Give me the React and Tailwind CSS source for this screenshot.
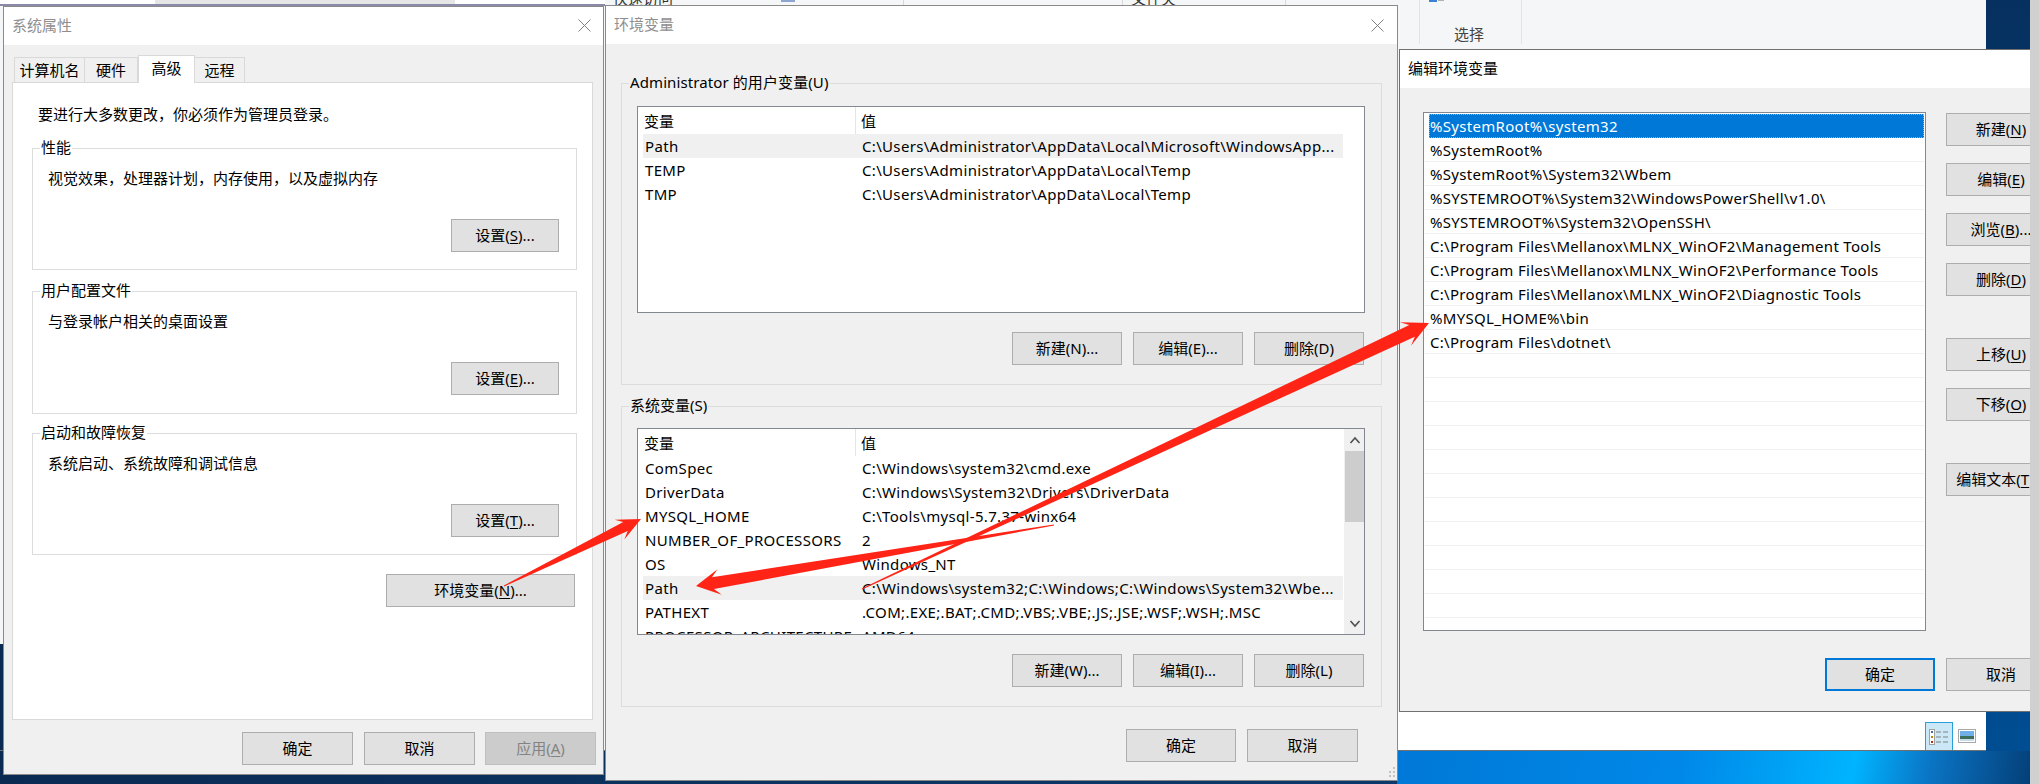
const FONT = "font-['Noto_Sans','Noto_Sans_CJK_SC',sans-serif] text-[15px] leading-5 text-black";

function Btn({ children, className = "", disabled = false, primary = false }) {
  const skin = disabled
    ? "bg-[#cccccc] border border-[#bfbfbf] text-[#838383]"
    : primary
      ? "bg-[#e1e1e1] border-2 border-[#0078d7]"
      : "bg-[#e1e1e1] border border-[#adadad]";
  return (
    <div className={`h-[33px] shrink-0 flex items-center justify-center whitespace-nowrap pb-[1px] ${skin} ${className}`}>
      {children}
    </div>
  );
}

function Close({ className = "" }) {
  return (
    <svg width="13" height="13" viewBox="0 0 13 13" className={`absolute ${className}`}>
      <path d="M0.5 0.5 L12.5 12.5 M12.5 0.5 L0.5 12.5" stroke="#808080" strokeWidth="1" fill="none" />
    </svg>
  );
}

function TitleBar({ title, dark = false, close = true, closeClass = "" }) {
  return (
    <div className="relative h-[38px] shrink-0 bg-white flex items-center pl-[8px] pb-[2px]">
      <span className={dark ? "text-black" : "text-[#8f8f8f]"}>{title}</span>
      {close && <Close className={closeClass} />}
    </div>
  );
}

function Group({ legend, className = "", children }) {
  return (
    <div className={`relative border border-[#dcdcdc] ${className}`}>
      <span className="absolute left-[7px] top-[-12px] bg-inherit px-[1px] whitespace-nowrap">{legend}</span>
      {children}
    </div>
  );
}

function SettingsGroup({ legend, text, btn, className = "" }) {
  return (
    <Group legend={legend} className={`bg-white flex flex-col ${className}`}>
      <div className="pl-[15px] pt-[19px] whitespace-nowrap">{text}</div>
      <Btn className="w-[108px] self-end mr-[17px] mt-[31px]">{btn}</Btn>
    </Group>
  );
}

function VarRow({ name, value, hot }) {
  return (
    <div className={`h-[24px] shrink-0 flex items-center whitespace-nowrap pl-[2px] tracking-[0.33px] pb-[1px] ${hot ? "bg-[#f0f0f0]" : ""}`}>
      <span className="w-[217px] shrink-0">{name}</span>
      <span className="overflow-hidden">{value}</span>
    </div>
  );
}

function VarList({ rows, scroll = false, className = "" }) {
  return (
    <div className={`h-[207px] w-[728px] ml-[15px] border border-[#828790] bg-white flex overflow-hidden ${className}`}>
      <div className="w-[705px] shrink-0 pl-[5px] flex flex-col">
        <div className="h-[27px] shrink-0 flex items-center">
          <span className="w-[213px] pl-[1px] h-full flex items-center border-r border-[#e5e5e5]">变量</span>
          <span className="pl-[5px]">值</span>
        </div>
        {rows.map((r) => (
          <VarRow key={r[0]} name={r[0]} value={r[1]} hot={r[2]} />
        ))}
      </div>
      {scroll && (
        <div className="w-[21px] ml-[1px] shrink-0 bg-[#f0f0f0] flex flex-col items-center">
          <svg width="12" height="22" viewBox="0 0 12 22" className="shrink-0">
            <path d="M1.5 14 L6 9 L10.500 14" stroke="#505050" strokeWidth="1.6" fill="none" />
          </svg>
          <div className="w-[19px] h-[71px] bg-[#cdcdcd] shrink-0" />
          <svg width="12" height="22" viewBox="0 0 12 22" className="shrink-0 mt-[91px]">
            <path d="M1.5 8 L6 13 L10.500 8" stroke="#505050" strokeWidth="1.6" fill="none" />
          </svg>
        </div>
      )}
    </div>
  );
}

function Mn({ c }) {
  return <span className="underline underline-offset-2">{c}</span>;
}

function arrowPoints(x1, y1, x2, y2, tail, neck, headLen, headW) {
  const L = Math.hypot(x2 - x1, y2 - y1);
  const ux = (x2 - x1) / L, uy = (y2 - y1) / L;
  const nx = -uy, ny = ux;
  const bx = x2 - ux * headLen, by = y2 - uy * headLen;
  const nk = x2 - ux * (headLen * 0.72), nky = y2 - uy * (headLen * 0.72);
  const p = [
    [x1 + nx * tail / 2, y1 + ny * tail / 2],
    [nk + nx * neck / 2, nky + ny * neck / 2],
    [bx + nx * headW / 2, by + ny * headW / 2],
    [x2, y2],
    [bx - nx * headW / 2, by - ny * headW / 2],
    [nk - nx * neck / 2, nky - ny * neck / 2],
    [x1 - nx * tail / 2, y1 - ny * tail / 2],
  ];
  return p.map((q) => q.map((v) => v.toFixed(1)).join(",")).join(" ");
}

const userRows = [
  ["Path", "C:\\Users\\Administrator\\AppData\\Local\\Microsoft\\WindowsApp...", true],
  ["TEMP", "C:\\Users\\Administrator\\AppData\\Local\\Temp"],
  ["TMP", "C:\\Users\\Administrator\\AppData\\Local\\Temp"],
];
const sysRows = [
  ["ComSpec", "C:\\Windows\\system32\\cmd.exe"],
  ["DriverData", "C:\\Windows\\System32\\Drivers\\DriverData"],
  ["MYSQL_HOME", "C:\\Tools\\mysql-5.7.37-winx64"],
  ["NUMBER_OF_PROCESSORS", "2"],
  ["OS", "Windows_NT"],
  ["Path", "C:\\Windows\\system32;C:\\Windows;C:\\Windows\\System32\\Wbe...", true],
  ["PATHEXT", ".COM;.EXE;.BAT;.CMD;.VBS;.VBE;.JS;.JSE;.WSF;.WSH;.MSC"],
  ["PROCESSOR_ARCHITECTURE", "AMD64"],
];
const paths = [
  "%SystemRoot%",
  "%SystemRoot%\\System32\\Wbem",
  "%SYSTEMROOT%\\System32\\WindowsPowerShell\\v1.0\\",
  "%SYSTEMROOT%\\System32\\OpenSSH\\",
  "C:\\Program Files\\Mellanox\\MLNX_WinOF2\\Management Tools",
  "C:\\Program Files\\Mellanox\\MLNX_WinOF2\\Performance Tools",
  "C:\\Program Files\\Mellanox\\MLNX_WinOF2\\Diagnostic Tools",
  "%MYSQL_HOME%\\bin",
  "C:\\Program Files\\dotnet\\",
  "", "", "", "", "", "", "", "", "", "", "",
];

function Backdrop() {
  return (
    <>
      {/* desktop wallpaper */}
      <div className="absolute left-0 top-0 w-[2030px] h-[784px] bg-[linear-gradient(90deg,#0a2a52_0%,#0c3565_50%,#0c3f78_100%)]" />
      <div className="absolute left-[1397px] top-[751px] w-[633px] h-[33px] bg-[linear-gradient(100deg,#0078d7_0%,#0088e8_45%,#00b4ff_72%,#0a74c4_84%,#043f78_100%)]" />
      <div className="absolute left-[1986px] top-0 w-[44px] h-[751px] bg-[linear-gradient(180deg,#06305f_0%,#004d92_100%)]" />
      <div className="absolute left-[2030px] top-0 w-[9px] h-[784px] bg-[#d0d0d0]" />
      {/* explorer behind the dialogs */}
      <div className="absolute left-0 top-0 w-[1986px] h-[751px] bg-[#f5f6f7] overflow-hidden border-b border-[#707070]">
        <div className="absolute left-0 top-0 w-[155px] h-[5px] bg-white" />
        <div className="absolute left-[155px] top-0 w-[300px] h-[5px] bg-[#e6e6e6]" />
        <div className="absolute left-[455px] top-0 w-[150px] h-[5px] bg-white" />
        <div className="absolute left-0 top-[4px] w-[605px] h-[2px] bg-[#8a8aa8]" />
        <span className="absolute left-[613px] top-[-12px] text-[15px] text-[#333]">快速访问</span>
        <span className="absolute left-[1131px] top-[-12px] text-[15px] text-[#333]">文件夹</span>
        <div className="absolute left-[781px] top-0 w-[14px] h-[2px] bg-[#8ea5cf]" />
        <div className="absolute left-[903px] top-0 w-px h-[5px] bg-[#d8d8d8]" />
        <div className="absolute left-[1122px] top-0 w-px h-[5px] bg-[#d8d8d8]" />
        <div className="absolute left-[1285px] top-0 w-px h-[5px] bg-[#d8d8d8]" />
        <div className="absolute left-[1419px] top-0 w-px h-[44px] bg-[#e2e3e5]" />
        <div className="absolute left-[1521px] top-0 w-px h-[44px] bg-[#e2e3e5]" />
        <div className="absolute left-[1429px] top-0 w-[8px] h-[2px] bg-[#3b82d6]" />
        <div className="absolute left-[1438px] top-0 w-[6px] h-[1px] bg-[#b0b0b0]" />
        <span className="absolute left-[1454px] top-[24px] text-[15px] leading-5 text-[#444]">选择</span>
        <div className="absolute left-0 top-[644px] w-[3px] h-[107px] bg-[#0a2a52]" />
        <div className="absolute left-[1397px] top-[712px] w-[589px] h-[38px] bg-white">
          <div className="absolute left-[528px] top-[10px] w-[28px] h-[29px] bg-[#cce8f6] border border-[#26a0da] flex items-center justify-center">
            <svg width="20" height="16" viewBox="0 0 20 16">
              <rect x="0.500" y="0.500" width="5" height="15" fill="#fff" stroke="#a0a0a0" />
              <rect x="2" y="2" width="2" height="2" fill="#3b6ea5" />
              <rect x="2" y="7" width="2" height="2" fill="#b8860b" />
              <rect x="2" y="12" width="2" height="2" fill="#b03010" />
              <path d="M7 3h5M14 3h5M7 8h5M14 8h5M7 13h5M14 13h5" stroke="#808080" strokeWidth="1" />
            </svg>
          </div>
          <svg width="18" height="14" viewBox="0 0 18 14" className="absolute left-[561px] top-[17px]">
            <rect x="0.500" y="0.500" width="17" height="13" fill="#fff" stroke="#a8a8a8" />
            <rect x="2" y="2" width="14" height="5" fill="#6fb0ea" />
            <rect x="2" y="7" width="14" height="3" fill="#3f6f5a" />
            <rect x="2" y="10" width="14" height="2" fill="#c4dcec" />
          </svg>
        </div>
      </div>
    </>
  );
}

export default function App() {
  return (
    <div className={`relative w-[2039px] h-[784px] overflow-hidden ${FONT}`}>
      <Backdrop />

      {/* 系统属性 */}
      <div className="absolute left-[3px] top-[6px] w-[601px] h-[769px] border border-[#8a8a8a] bg-[#f0f0f0] flex flex-col">
        <TitleBar title="系统属性" closeClass="left-[574px] top-[12px]" />
        <div className="h-[37px] shrink-0 flex items-end pl-[10px] relative z-10">
          <div className="w-[71px] h-[25px] bg-[#f0f0f0] border border-b-0 border-[#d9d9d9] flex items-center justify-center pb-[1px]">计算机名</div>
          <div className="w-[53px] h-[25px] bg-[#f0f0f0] border border-l-0 border-b-0 border-[#d9d9d9] flex items-center justify-center pb-[1px]">硬件</div>
          <div className="w-[57px] h-[28px] mb-[-1px] bg-white border border-b-0 border-[#d9d9d9] flex items-center justify-center pb-[4px]">高级</div>
          <div className="w-[50px] h-[25px] bg-[#f0f0f0] border border-l-0 border-b-0 border-[#d9d9d9] flex items-center justify-center pb-[1px]">远程</div>
        </div>
        <div className="ml-[8px] w-[581px] h-[638px] shrink-0 bg-white border border-[#d9d9d9] flex flex-col pl-[19px]">
          <div className="pl-[6px] pt-[21px] whitespace-nowrap">要进行大多数更改，你必须作为管理员登录。</div>
          <SettingsGroup className="w-[545px] h-[122px] mt-[24px]" legend="性能" text="视觉效果，处理器计划，内存使用，以及虚拟内存" btn={<>设置(<Mn c="S" />)...</>} />
          <SettingsGroup className="w-[545px] h-[123px] mt-[21px]" legend="用户配置文件" text="与登录帐户相关的桌面设置" btn={<>设置(<Mn c="E" />)...</>} />
          <SettingsGroup className="w-[545px] h-[122px] mt-[19px]" legend="启动和故障恢复" text="系统启动、系统故障和调试信息" btn={<>设置(<Mn c="T" />)...</>} />
          <Btn className="w-[189px] self-start ml-[354px] mt-[19px]">环境变量(<Mn c="N" />)...</Btn>
        </div>
        <div className="flex justify-end pr-[7px] mt-[12px]">
          <Btn className="w-[111px]">确定</Btn>
          <Btn className="w-[111px] ml-[11px]">取消</Btn>
          <Btn className="w-[111px] ml-[10px]" disabled>应用(<Mn c="A" />)</Btn>
        </div>
      </div>

      {/* 环境变量 */}
      <div className="absolute left-[605px] top-[5px] w-[793px] h-[776px] border border-[#8a8a8a] bg-[#f0f0f0] flex flex-col">
        <TitleBar title="环境变量" closeClass="left-[765px] top-[13px]" />
        <div className="pl-[15px] pt-[39px] flex flex-col">
          <Group legend={<span className="tracking-[0.1px]">Administrator 的用户变量(U)</span>} className="bg-[#f0f0f0] w-[761px] h-[302px] flex flex-col">
            <VarList rows={userRows} className="mt-[22px]" />
            <div className="flex justify-end gap-[11px] pr-[17px] mt-[19px]">
              <Btn className="w-[110px]">新建(N)...</Btn>
              <Btn className="w-[110px]">编辑(E)...</Btn>
              <Btn className="w-[110px]">删除(D)</Btn>
            </div>
          </Group>
          <Group legend="系统变量(S)" className="bg-[#f0f0f0] w-[761px] h-[301px] mt-[21px] flex flex-col">
            <VarList rows={sysRows} scroll className="mt-[21px]" />
            <div className="flex justify-end gap-[11px] pr-[17px] mt-[19px]">
              <Btn className="w-[110px]">新建(W)...</Btn>
              <Btn className="w-[110px]">编辑(I)...</Btn>
              <Btn className="w-[110px]">删除(L)</Btn>
            </div>
          </Group>
        </div>
        <div className="flex justify-end gap-[11px] pr-[39px] mt-[22px]">
          <Btn className="w-[110px]">确定</Btn>
          <Btn className="w-[111px]">取消</Btn>
        </div>
        <svg width="10" height="12" viewBox="0 0 10 12" className="absolute right-[1px] bottom-[2px]">
          <path d="M7 1h2v2H7zM7 5h2v2H7zM7 9h2v2H7zM3 5h2v2H3zM3 9h2v2H3z" fill="#c4c4c4" />
        </svg>
      </div>

      {/* 编辑环境变量 */}
      <div className="absolute left-[1399px] top-[49px] w-[631px] h-[663px] border-t border-l border-b border-[#707070] bg-[#f0f0f0] flex flex-col overflow-hidden">
        <TitleBar title="编辑环境变量" dark close={false} />
        <div className="flex pl-[23px] pt-[24px] gap-[20px]">
          <div className="w-[503px] h-[519px] shrink-0 border border-[#828790] bg-white overflow-hidden pt-[1px] pl-[1px] pr-[1px] tracking-[0.3px]">
            <div className="h-[24px] ml-[4px] bg-[#0078d7] text-white border border-dotted border-[#e0a050] flex items-center whitespace-nowrap">%SystemRoot%\system32</div>
            {paths.map((p, i) => (
              <div key={i} className="h-[24px] pl-[5px] border-b border-[#f0f0f0] flex items-center whitespace-nowrap">{p}</div>
            ))}
          </div>
          <div className="w-[110px] shrink-0 flex flex-col pt-[1px]">
            <Btn>新建(<Mn c="N" />)</Btn>
            <Btn className="mt-[17px]">编辑(<Mn c="E" />)</Btn>
            <Btn className="mt-[17px]">浏览(<Mn c="B" />)...</Btn>
            <Btn className="mt-[17px]">删除(<Mn c="D" />)</Btn>
            <Btn className="mt-[42px]">上移(<Mn c="U" />)</Btn>
            <Btn className="mt-[17px]">下移(<Mn c="O" />)</Btn>
            <Btn className="mt-[42px]">编辑文本(<Mn c="T" />)...</Btn>
          </div>
        </div>
        <div className="flex pl-[425px] gap-[11px] mt-[27px]">
          <Btn primary className="w-[110px]">确定</Btn>
          <Btn className="w-[110px]">取消</Btn>
        </div>
      </div>

      {/* annotation arrows */}
      <svg width="2039" height="784" viewBox="0 0 2039 784" className="absolute left-0 top-0 pointer-events-none">
        <polygon fill="#ff2416" points={arrowPoints(504, 586, 641, 519, 1, 10, 24, 22)} />
        <polygon fill="#ff2416" points={arrowPoints(1054, 525, 696, 586, 1, 12, 24, 26)} />
        <polygon fill="#ff2416" points={arrowPoints(862, 589, 1429, 323, 1, 13, 26, 26)} />
      </svg>
    </div>
  );
}
